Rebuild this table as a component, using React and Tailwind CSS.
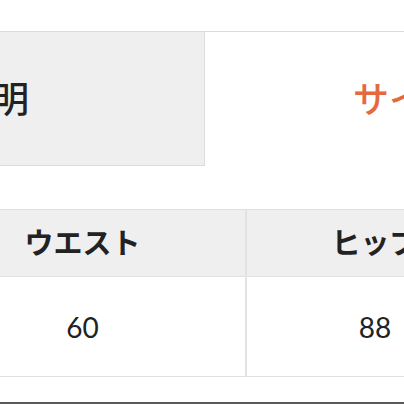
export default function App() {
  return (
    <div className="w-[404px] h-[404px] overflow-hidden bg-white font-['Lato','Noto_Sans_CJK_JP',sans-serif] text-[#222]">
      <div className="h-[31px]" />
      <div className="flex h-[135px]">
        <div className="w-[205px] shrink-0 bg-[#efefef] border border-l-0 border-[#dcdcdc] flex items-center justify-end pr-[175px] overflow-hidden whitespace-nowrap text-[36px] font-medium leading-none">
          商品説明
        </div>
        <div className="flex-1 border-t border-[#dcdcdc] flex items-center pl-[148px] overflow-hidden whitespace-nowrap text-[36px] font-medium leading-none text-[#e5693f]">
          サイズ
        </div>
      </div>
      <div className="mt-[43px] ml-[-80px] grid grid-cols-[327px_256px] border-t border-b border-[#e0e0e0]">
        <div className="h-[67px] bg-[#efefef] border-b border-r-2 border-[#e3e3e3] flex items-center justify-center text-[29px] font-bold">
          ウエスト
        </div>
        <div className="h-[67px] bg-[#efefef] border-b border-[#e3e3e3] flex items-center justify-center text-[29px] font-bold">
          ヒップ
        </div>
        <div className="h-[99px] border-r-2 border-[#e3e3e3] flex items-center justify-center text-[28px]">
          60
        </div>
        <div className="h-[99px] flex items-center justify-center text-[28px]">
          88
        </div>
      </div>
      <div className="h-[25px]" />
      <div className="border-t-2 border-[#5a5a5a]" />
    </div>
  );
}
